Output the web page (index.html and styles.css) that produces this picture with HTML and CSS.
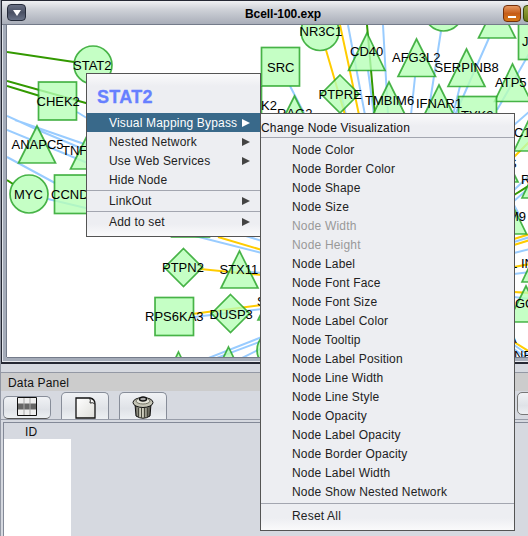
FILE: index.html
```html
<!DOCTYPE html>
<html lang="en">
<head>
<meta charset="utf-8">
<title>Bcell-100.exp</title>
<link rel="stylesheet" href="styles.css">
</head>
<body>
<main class="desktop">
  <section class="frame">
    <header class="titlebar">
      <button class="sysmenu" aria-label="Window menu"><svg width="8" height="6"><path d="M0 0H8L4 6Z" fill="#fff"/></svg></button>
      <h1 class="title">Bcell-100.exp</h1>
      <div class="winbuttons"><button class="winbtn minimize" aria-label="Minimize"></button><button class="winbtn maximize" aria-label="Maximize"></button></div>
    </header>
    <svg class="network" viewBox="7 25 521 332" width="521" height="332">
      <g class="edge blue">
        <path d="M7 116L38 130L90 152M15 120L90 146M7 130L90 164M7 157L55 183M77 112L90 120M48 199L90 209"/>
        <path d="M290 86L305 115M348 25L365 115M383 25L388 115M441 31L428 115M489 38L455 115M415 77L411 115M460 86L453 115M530 52L497 110M368 70L374 115M340 90L346 115"/>
        <path d="M195 236L262 253M246 236L262 241M238 271L262 273M194 317L262 309M206 359L262 337M214 359L262 341M240 359L262 348"/>
        <path d="M514 125L530 111M514 190L530 175M514 201L530 187M514 242L530 237M514 253L530 249M514 274L530 272M514 297L530 299M514 345L530 356M514 349L526 358M514 205L522 220"/>
      </g>
      <g class="edge yellow">
        <path d="M340 25L348 62L359 115M326 50L345 115M200 269L262 275M192 314L262 305M218 237L262 250M514 157L530 141M514 239L530 234M514 245L530 240M514 267L530 264M514 292L530 293M514 342L530 352"/>
      </g>
      <g class="edge green">
        <path d="M7 52L74 62M7 81L93 105M7 86L40 96M7 180L13 184M367 25L375 115M514 195L530 185"/>
      </g>
      <g class="node">
        <circle cx="93" cy="65" r="19"/><rect x="38.500" y="82" width="38" height="38"/>
        <path d="M37 126L55.500 163H18.500ZM89 132L107.500 169H70.500Z"/>
        <circle cx="29" cy="194" r="19"/><rect x="54.500" y="175" width="38" height="38.500"/>
        <rect x="261.500" y="47.500" width="38" height="38.500"/><path d="M294.500 96L313 133H276Z"/>
        <path class="stem" d="M261.500 86V115"/>
        <circle cx="320" cy="31.500" r="19"/><circle cx="443.500" cy="12" r="19"/>
        <path d="M340 75L359 94L340 113L321 94Z"/>
        <path d="M367 33L385 70.500H348.500ZM416.500 39L435.500 76.500H398ZM466.500 49L485 86.500H448ZM512.500 64L531 101.500H494.500ZM389 82L407.500 119.500H370.500ZM439 85L457.500 122.500H420.500ZM497 1L515.500 38H478.500Z"/>
        <rect x="458.500" y="96.500" width="38" height="38"/><rect x="518.500" y="21.500" width="38" height="38"/>
        <path d="M532 113L551 151H514ZM499 144L518 182H481ZM540 160L559 198H522ZM508 196L526.500 234H489.500ZM540 244L559 282H522ZM526 286L544 322H508Z"/>
        <path d="M183.500 248.500L202.500 267.500L183.500 286.500L164.500 267.500ZM230.500 294.500L249.500 313.500L230.500 332.500L211.500 313.500ZM239.500 251L258 288H221Z"/>
        <rect x="155" y="297.500" width="38.500" height="38"/><circle cx="276" cy="350" r="19"/>
        <path d="M178.500 352L197 390H160ZM228.500 347L247 385H210ZM277 282L296 320H258Z"/>
        <rect x="171.500" y="199" width="38" height="38"/>
      </g>
      <g class="label">
        <text x="73" y="70">STAT2</text><text x="36.500" y="106">CHEK2</text><text x="11.500" y="149">ANAPC5</text><text x="62" y="155">TNF</text>
        <text x="14" y="199">MYC</text><text x="51" y="199">CCND</text><text x="267" y="72">SRC</text><text x="261" y="110">K2</text><text x="277" y="118">RAG2</text>
        <text x="299.500" y="36">NR3C1</text><text x="318.500" y="99">PTPRE</text><text x="350" y="56">CD40</text><text x="392" y="62">AFG3L2</text>
        <text x="434.500" y="72">SERPINB8</text><text x="495" y="87">ATP5</text><text x="365" y="105">TMBIM6</text><text x="416" y="108">IFNAR1</text>
        <text x="461" y="120">TYK2</text><text x="522" y="46">J</text>
        <text x="514" y="137">C1</text><text x="508" y="168">S</text><text x="521" y="184">R</text><text x="508" y="221">M9</text><text x="510" y="268">L</text><text x="521" y="268">IN</text>
        <text x="515" y="308">GC</text><text x="508" y="343">A</text><text x="514" y="360">NF</text>
        <text x="162" y="272">PTPN2</text><text x="219.500" y="274">STX11</text><text x="145" y="321">RPS6KA3</text><text x="209.500" y="319">DUSP3</text><text x="257" y="306">S</text>
      </g>
    </svg>
  </section>

  <section class="datapanel">
    <h2 class="panelname">Data Panel</h2>
    <nav class="tabs">
      <button class="tab short" aria-label="Select attributes">
        <svg width="20" height="19" viewBox="0 0 20 19"><path d="M.5.500H19.500V18.500H.5Z" fill="#eee" stroke="#111"/><path d="M1 7H19V12.500H1Z" fill="#666"/><path d="M7 1V18M13 1V18M1 6.500H19M1 12.500H19" stroke="#aaa"/></svg>
      </button>
      <button class="tab" aria-label="New attribute">
        <svg width="21" height="22" viewBox="0 0 21 22"><defs><linearGradient id="paper" x2="1" y2="1"><stop stop-color="#fff"/><stop offset="1" stop-color="#dededa"/></linearGradient></defs><path d="M1 1H15Q20 2 20 7V21H1Z" fill="url(#paper)" stroke="#111" stroke-width="1.300"/><path d="M14.500 1Q16 3 15 6Q18 5 20 7" fill="#fff" stroke="#222"/></svg>
      </button>
      <button class="tab" aria-label="Delete attributes">
        <svg width="22" height="23" viewBox="0 0 22 23"><defs><linearGradient id="can"><stop stop-color="#55554b"/><stop offset=".4" stop-color="#dedece"/><stop offset="1" stop-color="#44443b"/></linearGradient></defs><path d="M3 8L4 20Q11 24.500 18 20L19 8Z" fill="url(#can)" stroke="#111"/><path d="M6.500 12V21M9.500 12V22M12.500 12V22M15.500 12V21" stroke="#46463c"/><ellipse cx="11" cy="6.500" rx="10" ry="5" fill="#c5c5b6" stroke="#111"/><ellipse cx="11" cy="5" rx="7" ry="3" fill="#e5e5d9" stroke="#77776a"/><ellipse cx="11" cy="3" rx="3.500" ry="2" fill="#aaa" stroke="#111" stroke-width="1.300"/></svg>
      </button>
      <button class="tab last" aria-label="More"></button>
    </nav>
    <div class="table"><div class="colhead">ID</div><div class="column"></div></div>
  </section>

  <div class="menu context">
    <div class="menutitle">STAT2</div>
    <div class="item selected">Visual Mapping Bypass<i class="arrow"></i></div>
    <div class="item">Nested Network<i class="arrow"></i></div>
    <div class="item">Use Web Services<i class="arrow"></i></div>
    <div class="item">Hide Node</div>
    <hr>
    <div class="item">LinkOut<i class="arrow"></i></div>
    <hr>
    <div class="item">Add to set<i class="arrow"></i></div>
  </div>

  <div class="menu submenu">
    <div class="subtitle">Change Node Visualization</div>
    <hr>
    <div class="item">Node Color</div>
    <div class="item">Node Border Color</div>
    <div class="item">Node Shape</div>
    <div class="item">Node Size</div>
    <div class="item disabled">Node Width</div>
    <div class="item disabled">Node Height</div>
    <div class="item">Node Label</div>
    <div class="item">Node Font Face</div>
    <div class="item">Node Font Size</div>
    <div class="item">Node Label Color</div>
    <div class="item">Node Tooltip</div>
    <div class="item">Node Label Position</div>
    <div class="item">Node Line Width</div>
    <div class="item">Node Line Style</div>
    <div class="item">Node Opacity</div>
    <div class="item">Node Label Opacity</div>
    <div class="item">Node Border Opacity</div>
    <div class="item">Node Label Width</div>
    <div class="item">Node Show Nested Network</div>
    <hr class="endrule">
    <div class="item">Reset All</div>
  </div>
</main>
</body>
</html>
```

FILE: styles.css
```css
* { box-sizing: border-box; }
body { margin: 0; background: #d6d9e0; font: 12px "Liberation Sans", Arial, sans-serif; letter-spacing: .18px; color: #111; }
button { padding: 0; font: inherit; }
h1, h2 { margin: 0; }
.desktop { position: relative; width: 528px; height: 536px; overflow: hidden; border-left: 1px solid #9398a4; }

.frame { height: 364px; border-left: 1px solid #252833; border-bottom: 2px solid #252833; border-top: 1px solid #252833; background: #a5acb9; padding-left: 5px; box-shadow: inset 1px 0 #e2e5ec, inset 0 -1px #e8eaef; overflow: hidden; }
.titlebar { display: flex; align-items: center; height: 24px; margin-left: -5px; padding-left: 5px; background: linear-gradient(#f0f1f3, #d0d3d9 35%, #a9aeb9); border-bottom: 1px solid #747b8a; }
.sysmenu { display: flex; align-items: center; justify-content: center; width: 19px; height: 17px; border: 1px solid #252b3a; border-radius: 4px; background: linear-gradient(#697084, #4a5164 50%, #697287); }
.title { flex: 1; padding: 2px 0 0 37px; text-align: center; font-size: 12px; letter-spacing: -.05px; color: #000; }
.winbuttons { display: flex; gap: 2px; width: 25px; margin-top: 1px; }
.winbtn { flex: none; width: 18px; height: 17px; border: 1px solid #74300a; border-radius: 4px; background: linear-gradient(#e69861, #c65d18 50%, #d77816); }
.minimize { display: flex; align-items: flex-end; justify-content: center; padding-bottom: 3px; }
.minimize::after { content: ""; width: 8px; height: 2px; background: #fff; }
.maximize { border-color: #34430b; background: linear-gradient(#9aa646, #66780f); }
.network { display: block; background: #fff; box-shadow: -1px 0 #747b8a, 0 1px #747b8a; }

.edge { fill: none; stroke-width: 2; }
.blue { stroke: #99ccff; }
.yellow { stroke: #ffcc00; }
.green { stroke: #339900; }
.node { fill: rgba(183, 255, 183, .8); stroke: rgba(32, 160, 32, .8); stroke-width: 1.7; }
.stem { fill: none; }
.label { font-size: 13px; letter-spacing: 0; fill: #000; }

.datapanel { margin-top: 8px; border-top: 1px solid #9398a4; }
.panelname { height: 18px; padding: 3px 0 0 7px; background: #ccc; font-size: 12px; font-weight: normal; line-height: 14px; }
.tabs { display: flex; align-items: flex-end; height: 29px; padding: 2px 0 0 2px; border-bottom: 1px solid #989da9; }
.tab { flex: none; display: flex; align-items: flex-end; justify-content: center; width: 48px; height: 27px; margin-right: 10px; border: 1px solid #878d99; border-bottom: 0; border-radius: 5px 5px 0 0; background: linear-gradient(#f0f2f5, #dfe2e7 60%, #edf0f3); }
.tab.short { height: 23px; align-items: flex-start; border-bottom: 1px solid #555; border-radius: 5px; }
.tab.last { height: 23px; margin: 0 0 4px 340px; border: 1px solid #777; border-radius: 5px; }
.table { margin: 2px 0 0 2px; height: 115px; border: 1px solid #838997; border-right: 0; }
.colhead { width: 67px; height: 16px; padding: 3px 0 0 21px; line-height: 13px; }
.column { width: 67px; height: 100px; background: #fff; }

.menu { position: absolute; border: 1px solid #545454; background: linear-gradient(#fafafb, #edeef2 12px, #edeef2 calc(100% - 12px), #fafafb); }
.context { left: 85px; top: 73px; width: 175px; height: 164px; }
.submenu { left: 259px; top: 113px; width: 255px; height: 418px; }
.menu hr { height: 1px; margin: 1px 0 0; border: 0; background: #a3a6b0; }
.menutitle { height: 39px; padding: 13px 0 0 10px; font: bold 18px/20px "Liberation Sans", Arial, sans-serif; letter-spacing: .3px; color: #6680ff; -webkit-text-stroke: .3px #6680ff; }
.item { display: flex; align-items: center; justify-content: space-between; height: 19px; padding: 0 10px 0 22px; color: #222; white-space: nowrap; }
.selected { background: #39698a; color: #fff; }
.arrow { border: 4px solid transparent; border-left: 8px solid #444; border-right: 0; }
.selected .arrow { border-left-color: #fff; }
.subtitle { height: 22px; line-height: 28px; color: #111; }
.submenu .item { padding-left: 31px; }
.submenu hr + .item { margin-top: 2px; }
.menu .endrule { margin-top: 2px; }
.disabled { color: #999; }
```
